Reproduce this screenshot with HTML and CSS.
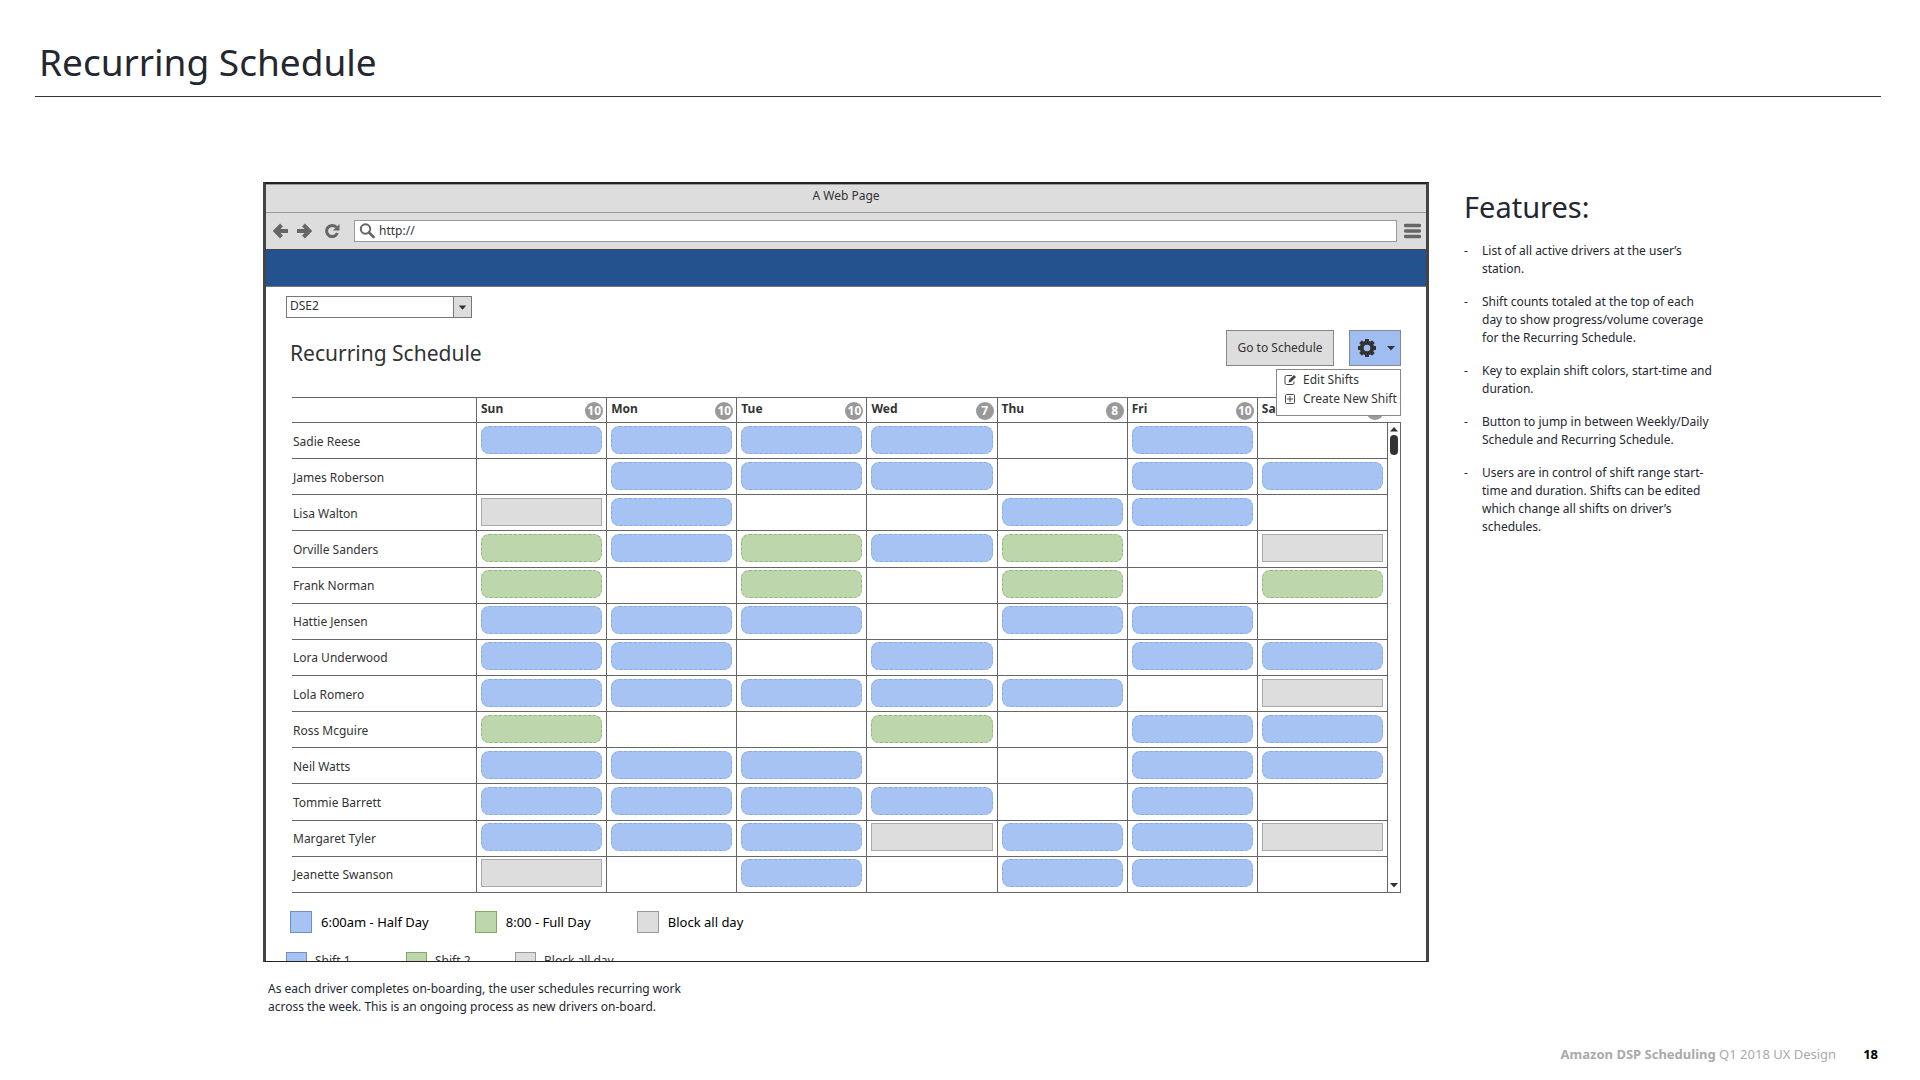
FILE: index.html
```html
<!DOCTYPE html>
<html lang="en">
<head>
<meta charset="utf-8">
<title>Recurring Schedule</title>
<link rel="stylesheet" href="styles.css">
</head>
<body>
<header class="slide-header"><h1>Recurring Schedule</h1></header>

<main class="slide-body">
  <figure class="mockup">
    <div class="browser">
      <div class="title-bar">A Web Page</div>
      <div class="toolbar">
        <button class="icon-button" type="button" aria-label="Back"><svg width="16" height="16" viewBox="0 0 16 16"><path d="M8.500 2 2.500 8l6 6M3 8h12" fill="none" stroke="#666" stroke-width="4"/></svg></button>
        <button class="icon-button" type="button" aria-label="Forward"><svg width="16" height="16" viewBox="0 0 16 16"><path d="M7.500 2l6 6-6 6M13 8H1" fill="none" stroke="#666" stroke-width="4"/></svg></button>
        <button class="icon-button reload" type="button" aria-label="Reload"><svg width="16" height="16" viewBox="0 0 16 16"><path d="M12.300 4.200A5.600 5.600 0 1 0 13.400 10" fill="none" stroke="#666" stroke-width="3"/><path d="M15.500 1v6.500H9z" fill="#666"/></svg></button>
        <label class="address">
          <svg width="16" height="16" viewBox="0 0 16 16"><circle cx="6.500" cy="6" r="4.700" fill="none" stroke="#666" stroke-width="2"/><path d="M10 9.500l4.500 4.500" stroke="#666" stroke-width="2.600" stroke-linecap="round"/></svg>
          <input type="text" value="http://" aria-label="Address">
        </label>
        <button class="icon-button" type="button" aria-label="Browser menu"><svg width="17" height="16" viewBox="0 0 17 16"><path d="M1.500 2.500h14M1.500 8h14M1.500 13.500h14" stroke="#666" stroke-width="3.400" stroke-linecap="round"/></svg></button>
      </div>
      <div class="app-bar"></div>

      <div class="app">
        <div class="station">
          <select aria-label="Station"><option>DSE2</option></select>
          <svg class="station-arrow" width="18" height="20" viewBox="0 0 18 20"><path d="M5 8.500h8L9 13z" fill="#333"/></svg>
        </div>

        <div class="heading-row">
          <h2>Recurring Schedule</h2>
          <div class="actions">
            <button class="go-button" type="button">Go to Schedule</button>
            <div class="settings">
              <button class="gear-button" type="button" aria-label="Shift settings" aria-expanded="true">
                <svg width="20" height="20" viewBox="0 0 20 20"><path d="M10 1v18M1 10h18M3.600 3.600l12.800 12.800M16.400 3.600L3.600 16.400" stroke="#333" stroke-width="4"/><circle cx="10" cy="10" r="5.300" fill="#9fbdf0" stroke="#333" stroke-width="4"/></svg>
                <svg width="8" height="5" viewBox="0 0 8 5"><path d="M0 0h8L4 4.500z" fill="#333"/></svg>
              </button>
              <div class="menu">
                <button type="button"><svg width="12" height="12" viewBox="0 0 12 12"><path d="M8 1.500H2.500a1.500 1.500 0 0 0-1.500 1.500v6a1.500 1.500 0 0 0 1.500 1.500h6A1.500 1.500 0 0 0 10 9V7.500" fill="none" stroke="#444"/><path d="M4.500 8.500l.5-2.500L10 1l2 2-5 5z" fill="#444"/></svg>Edit Shifts</button>
                <button type="button"><svg width="12" height="12" viewBox="0 0 12 12"><rect x="1.500" y="1.500" width="9" height="9" rx="1" fill="none" stroke="#444"/><path d="M6 3v6M3 6h6" stroke="#444"/></svg>Create New Shift</button>
              </div>
            </div>
          </div>
        </div>

        <div class="schedule">
          <table>
            <thead><tr id="days"><th class="name-col" aria-label="Driver"></th></tr></thead>
            <tbody id="drivers"></tbody>
          </table>
          <div class="scrollbar" aria-hidden="true">
            <svg width="8" height="5" viewBox="0 0 8 5"><path d="M0 4.500h8L4 0z" fill="#333"/></svg>
            <i class="thumb"></i>
            <svg width="8" height="5" viewBox="0 0 8 5"><path d="M0 0h8L4 4.500z" fill="#333"/></svg>
          </div>
        </div>

        <ul class="legend">
          <li class="half">6:00am - Half Day</li>
          <li class="full">8:00 - Full Day</li>
          <li class="block">Block all day</li>
        </ul>
        <div class="clipped">
          <ul class="legend small">
            <li class="half">Shift 1</li>
            <li class="full">Shift 2</li>
            <li class="block">Block all day</li>
          </ul>
        </div>
      </div>
    </div>
    <figcaption>As each driver completes on-boarding, the user schedules recurring work across the week. This is an ongoing process as new drivers on-board.</figcaption>
  </figure>

  <aside class="features">
    <h2>Features:</h2>
    <ul>
      <li>List of all active drivers at the user’s station.</li>
      <li>Shift counts totaled at the top of each day to show progress/volume coverage for the Recurring Schedule.</li>
      <li>Key to explain shift colors, start-time and duration.</li>
      <li>Button to jump in between Weekly/Daily Schedule and Recurring Schedule.</li>
      <li>Users are in control of shift range start-time and duration. Shifts can be edited which change all shifts on driver’s schedules.</li>
    </ul>
  </aside>
</main>

<footer class="slide-footer"><span><b>Amazon DSP Scheduling</b> Q1 2018 UX Design</span><b class="page">18</b></footer>
<script src="schedule.js"></script>
</body>
</html>
```
FILE: styles.css
```css
* { box-sizing: border-box; }
body {
  margin: 0;
  min-height: 100vh;
  display: flex;
  flex-direction: column;
  background: #fff;
  color: #232730;
  font: 12px/18px "Noto Sans", "Open Sans", sans-serif;
}
h1, h2, ul, figure { margin: 0; padding: 0; font-weight: 400; }
ul { list-style: none; }
button, input, select { font: inherit; color: inherit; }
svg { display: block; flex: none; }

.slide-header { margin: 0 39px 0 35px; padding: 37px 4px 10px; border-bottom: 1px solid #33343f; }
h1 { font-size: 37px; line-height: 49px; }

.slide-body {
  display: grid;
  grid-template-columns: minmax(0, 1fr) 250px;
  gap: 35px;
  padding: 85px 206px 0 263px;
}

.browser { border: 3px solid #444; border-top: 2px solid #222; border-bottom: 1px solid #222; color: #333; }
.title-bar { height: 29px; line-height: 22px; text-align: center; background: #ddd; border-bottom: 1px solid #999; border-top: 1px solid #999; }
.toolbar { display: flex; align-items: center; gap: 7px; height: 36px; padding: 0 5px 0 7px; background: #ddd; }
.icon-button { padding: 0; border: 0; background: none; }
.reload { margin: 0 7px 0 5px; }
.address { flex: 1; display: flex; align-items: center; gap: 4px; height: 22px; padding: 0 4px; background: #fff; border: 1px solid #999; }
.address input { flex: 1; min-width: 0; padding: 0; border: 0; outline: 0; background: none; }
.app-bar { height: 38px; background: #24528f; border-top: 1px solid #444; border-bottom: 1px solid #777; }

.app { padding: 9px 25px 0 26px; }
.station { position: relative; width: 186px; margin-left: -6px; }
.station select { display: block; appearance: none; width: 100%; height: 22px; padding: 0 3px 2px; background: #fff; border: 1px solid #777; border-radius: 0; }
.station-arrow { position: absolute; top: 1px; right: 1px; background: #ddd; border-left: 1px solid #777; pointer-events: none; }

.heading-row { display: flex; justify-content: space-between; align-items: flex-start; height: 79px; padding-top: 12px; }
.heading-row h2 { margin: 9px 0 0 -2px; font-size: 21px; line-height: 28px; }
.actions { display: flex; gap: 15px; }
.go-button { width: 108px; height: 36px; padding: 0; background: #ddd; border: 1px solid #888; }
.settings { position: relative; }
.gear-button { display: flex; align-items: center; justify-content: center; gap: 10px; width: 52px; height: 36px; padding: 0 0 0 2px; background: #9fbdf0; border: 1px solid #888; }
.menu { position: absolute; top: 39px; right: 0; z-index: 1; width: 125px; padding: 0 0 7px 7px; background: #fff; border: 1px solid #888; }
.menu button { display: flex; align-items: center; gap: 7px; width: 100%; height: 19px; padding: 0; border: 0; background: none; white-space: nowrap; }

.schedule { display: flex; border: solid #666; border-width: 1px 0; }
table { flex: 1; min-width: 0; width: 100%; height: 494px; table-layout: fixed; border-collapse: separate; border-spacing: 0; }
th, td { padding: 0; text-align: left; }
tr > * + * { border-left: 1px solid #666; }
tbody tr > * { border-top: 1px solid #666; }
.name-col { width: 184px; }
thead th { height: 24px; }
tbody th { padding: 2px 0 0 1px; font-weight: 400; }
.day { display: flex; justify-content: space-between; align-items: center; height: 24px; padding: 0 3px 2px 4px; }
.count { width: 18px; height: 18px; margin-top: 4px; border-radius: 50%; background: #999; color: #fff; line-height: 18px; text-align: center; }
td { padding: 0 4px 2px; }
.shift { height: 28px; border: 1px dashed #86abde; border-radius: 8px; background: #a6c3f3; }
.shift.full { background: #bdd6ac; border-color: #8fb878; }
.shift.block { background: #ddd; border: 1px solid #aaa; border-radius: 0; }

.scrollbar { flex: none; display: flex; flex-direction: column; align-items: center; width: 14px; margin-top: 24px; padding: 4px 0; border: solid #666; border-width: 1px 1px 0; }
.thumb { width: 8px; height: 20px; margin: 3px 0 auto; border-radius: 4px; background: #333; }

.legend { display: flex; gap: 46px; margin: 18px 0 0 -2px; font-size: 13px; line-height: 20px; color: #000; }
.legend li { display: flex; align-items: center; gap: 9px; }
.legend li::before { content: ""; width: 20px; height: 20px; background: #a6c3f3; border: 1px solid #6f8fc4; }
.legend li.full::before { background: #bdd6ac; border-color: #7fac62; }
.legend li.block::before { background: #ddd; border-color: #999; }
.clipped { height: 9px; margin: 19px 0 0 -6px; overflow: hidden; }
.legend.small { display: grid; grid-template-columns: 120px 109px auto; gap: 0; margin: 0; font-size: 12px; line-height: 18px; color: #333; }
.legend.small li { align-items: flex-start; gap: 8px; }
.legend.small li::before { width: 19px; }

figcaption { max-width: 430px; padding: 18px 0 0 5px; }

.features { padding-top: 5px; }
.features h2 { font-size: 29px; line-height: 40px; }
.features ul { display: grid; gap: 15px; margin-top: 15px; }
.features li { display: flex; }
.features li::before { content: "-"; flex: none; width: 18px; }

.slide-footer { display: flex; justify-content: flex-end; gap: 27px; margin-top: auto; padding: 0 42px 17px; font-size: 13px; color: #aaa; }
.page { color: #000; }
```
FILE: schedule.js
```js
// Shift counts per day; b = half day, g = full day, x = blocked, . = free
const days = [['Sun', 10], ['Mon', 10], ['Tue', 10], ['Wed', 7], ['Thu', 8], ['Fri', 10], ['Sat', 9]];
const drivers = [
  ['Sadie Reese', 'bbbb.b.'],
  ['James Roberson', '.bbb.bb'],
  ['Lisa Walton', 'xb..bb.'],
  ['Orville Sanders', 'gbgbg.x'],
  ['Frank Norman', 'g.g.g.g'],
  ['Hattie Jensen', 'bbb.bb.'],
  ['Lora Underwood', 'bb.b.bb'],
  ['Lola Romero', 'bbbbb.x'],
  ['Ross Mcguire', 'g..g.bb'],
  ['Neil Watts', 'bbb..bb'],
  ['Tommie Barrett', 'bbbb.b.'],
  ['Margaret Tyler', 'bbbxbbx'],
  ['Jeanette Swanson', 'x.b.bb.']
];
const kinds = { b: 'half', g: 'full', x: 'block' };

document.getElementById('days').insertAdjacentHTML('beforeend', days.map(([day, count]) =>
  `<th><div class="day">${day}<span class="count">${count}</span></div></th>`).join(''));

document.getElementById('drivers').innerHTML = drivers.map(([name, week]) =>
  `<tr><th>${name}</th>${[...week].map(k =>
    `<td>${kinds[k] ? `<div class="shift ${kinds[k]}"></div>` : ''}</td>`).join('')}</tr>`).join('');
```
